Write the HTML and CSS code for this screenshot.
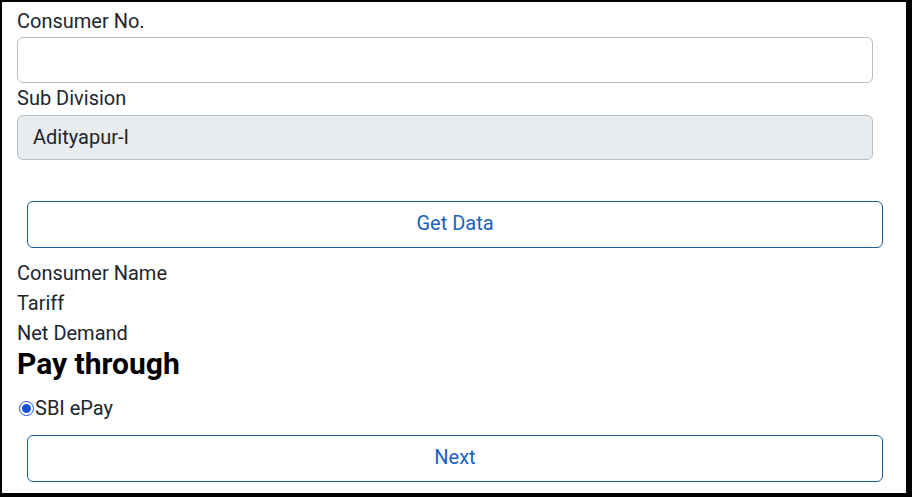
FILE: index.html
```html
<!DOCTYPE html>
<html>
<head>
<meta charset="utf-8">
<link rel="stylesheet" href="styles.css">
</head>
<body>
<div class="frame">
  <div class="form">
    <label class="lbl" for="cno">Consumer No.</label>
    <input class="field" id="cno" type="text">
    <label class="lbl">Sub Division</label>
    <div class="field field-ro">Adityapur-I</div>
    <button class="btn btn-get" type="button">Get Data</button>
    <div class="info first">Consumer Name</div>
    <div class="info">Tariff</div>
    <div class="info">Net Demand</div>
    <h3 class="title">Pay through</h3>
    <label class="radio"><input type="radio" name="pay" checked>SBI ePay</label>
    <button class="btn btn-next" type="button">Next</button>
  </div>
</div>
</body>
</html>
```
FILE: styles.css
```css
html, body {
  margin: 0;
  padding: 0;
  background: #fff;
}
body {
  font-family: Roboto, "Liberation Sans", Arial, sans-serif;
  font-size: 20px;
  color: #212529;
}
.frame {
  box-sizing: border-box;
  width: 912px;
  height: 497px;
  border-style: solid;
  border-color: #000;
  border-width: 2px 6px 4px 2px;
  padding: 4px 0 0 15px;
  overflow: hidden;
}
.form {
  width: 856px;
  display: flex;
  flex-direction: column;
  align-items: stretch;
}
.lbl {
  display: block;
  line-height: 30px;
}
.lbl + .field {
  margin-top: 1px;
}
.field {
  box-sizing: border-box;
  height: 46px;
  margin: 0;
  border: 1px solid #b7bcc1;
  border-radius: 6px;
  background: #fff;
  font: inherit;
  color: inherit;
  padding: 0 15px 1px;
  outline: none;
}
.field-ro {
  margin-top: 2px;
  height: 45px;
  background: #e9ecef;
  display: flex;
  align-items: center;
}
.lbl + .field-ro {
  margin-top: 2px;
}
.btn {
  box-sizing: border-box;
  width: 856px;
  height: 47px;
  margin-left: 10px;
  padding: 0 0 3px;
  border: 1px solid #1d5c97;
  border-radius: 6px;
  background: #fff;
  color: #1a62bf;
  font: inherit;
  cursor: pointer;
}
.btn-get {
  margin-top: 41px;
}
.info {
  line-height: 30px;
}
.info.first {
  margin-top: 10px;
}
.title {
  margin: 0;
  font-size: 30px;
  font-weight: 700;
  line-height: 32px;
  color: #000;
}
.radio {
  display: block;
  margin-top: 13px;
  line-height: 30px;
}
.radio input {
  width: 15px;
  height: 15px;
  margin: 0 1px 0 2px;
  vertical-align: -1px;
  accent-color: #1a4fd8;
}
.btn-next {
  margin-top: 12px;
}
```
